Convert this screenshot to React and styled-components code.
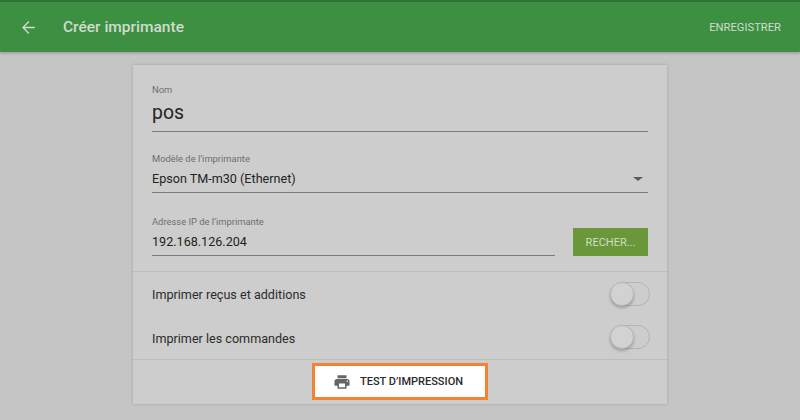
import React from 'react';
import styled, { createGlobalStyle } from 'styled-components';

const GlobalStyle = createGlobalStyle`
  html, body {
    margin: 0;
    padding: 0;
    background: #c5c5c5;
    font-family: Roboto, "Liberation Sans", sans-serif;
  }
`;

const Page = styled.div`
  width: 800px;
  height: 420px;
  overflow: hidden;
  background: #c5c5c5;
`;

const Header = styled.header`
  display: flex;
  align-items: center;
  height: 50px;
  border-top: 2px solid #2f7336;
  background: #3d8f42;
  box-shadow: 0 1px 3px rgba(0, 0, 0, 0.25);
`;

const BackButton = styled.div`
  display: flex;
  width: 19px;
  margin-left: 19px;
  color: #d2dcd2;
`;

const Title = styled.div`
  margin-left: 25px;
  flex: 1;
  color: #cfdccf;
  font-size: 15.5px;
  font-weight: 500;
`;

const SaveAction = styled.div`
  margin-right: 19px;
  color: #cfdccf;
  font-size: 11.2px;
  font-weight: 400;
`;

const Card = styled.main`
  width: 534px;
  height: 339px;
  margin: 13px auto 0;
  display: flex;
  flex-direction: column;
  background: #cdcdcd;
  box-shadow: 0 0 3px rgba(0, 0, 0, 0.18);
`;

const Fields = styled.div`
  display: flex;
  flex-direction: column;
  height: 207px;
  padding: 0 19px;
  box-sizing: border-box;
  border-bottom: 1px solid #bdbdbd;
`;

const Field = styled.div`
  display: flex;
  flex-direction: column;
  margin-top: ${({ $top }) => $top}px;
`;

const Label = styled.div`
  color: #6e6e6e;
  font-size: 9.4px;
  line-height: 12px;
`;

const Value = styled.div`
  display: flex;
  align-items: center;
  justify-content: space-between;
  box-sizing: border-box;
  height: ${({ $big }) => ($big ? 36 : 28)}px;
  border-bottom: 1px solid #7c7c7c;
  color: #232323;
  font-size: ${({ $big }) => ($big ? 19.4 : 12.6)}px;
  padding-bottom: ${({ $big }) => ($big ? 3 : 0)}px;
`;

const Caret = styled.span`
  width: 0;
  height: 0;
  margin-right: 5px;
  border-left: 5px solid transparent;
  border-right: 5px solid transparent;
  border-top: 4px solid #5c5c5c;
`;

const IpRow = styled.div`
  display: flex;
  align-items: flex-end;
  justify-content: space-between;
  margin-top: 23px;
`;

const IpField = styled.div`
  width: 403px;
`;

const SearchButton = styled.div`
  display: flex;
  align-items: center;
  justify-content: center;
  width: 75px;
  height: 28px;
  background: #6a9739;
  color: #cfdcc4;
  font-size: 11px;
`;

const Toggles = styled.div`
  display: flex;
  flex-direction: column;
  height: 87px;
  border-bottom: 1px solid #bdbdbd;
`;

const ToggleRow = styled.div`
  flex: 1;
  display: flex;
  align-items: center;
  justify-content: space-between;
  padding: 0 17px 0 19px;
  color: #2c2c2c;
  font-size: 12.6px;
`;

const ToggleLabel = styled.span`
  padding-top: 2px;
`;

const Toggle = styled.div`
  position: relative;
  box-sizing: border-box;
  width: 40px;
  height: 24px;
  border: 1px solid #b4b4b4;
  border-radius: 12px;
`;

const Knob = styled.span`
  position: absolute;
  left: -1px;
  top: -1px;
  width: 24px;
  height: 24px;
  border-radius: 50%;
  box-sizing: border-box;
  border: 1px solid #b8b8b8;
  background: #d2d2d2;
  box-shadow: 0 2px 3px rgba(0, 0, 0, 0.22);
`;

const Footer = styled.div`
  flex: 1;
  display: flex;
  align-items: center;
  justify-content: center;
`;

const TestButton = styled.div`
  display: flex;
  align-items: center;
  justify-content: center;
  gap: 9px;
  box-sizing: border-box;
  width: 176px;
  height: 37px;
  margin-top: -1px;
  padding-right: 4px;
  border: 3px solid #f58233;
  background: #ffffff;
  color: #2a2a2a;
  font-size: 11px;
  font-weight: 500;
`;

const PrinterIcon = () => (
  <svg width="18" height="18" viewBox="0 0 24 24" fill="#666666">
    <path d="M19 8H5c-1.66 0-3 1.34-3 3v6h4v4h12v-4h4v-6c0-1.66-1.34-3-3-3zm-3 11H8v-5h8v5zm3-7c-.55 0-1-.45-1-1s.45-1 1-1 1 .45 1 1-.45 1-1 1zm-1-9H6v4h12V3z" />
  </svg>
);

const ArrowIcon = () => (
  <svg width="19" height="19" viewBox="0 0 24 24" fill="none" stroke="currentColor" strokeWidth="1.6">
    <path d="M20 12H5.5M12.5 4.5L5 12l7.5 7.5" />
  </svg>
);

const App = () => (
  <Page>
    <GlobalStyle />
    <Header>
      <BackButton>
        <ArrowIcon />
      </BackButton>
      <Title>Créer imprimante</Title>
      <SaveAction>ENREGISTRER</SaveAction>
    </Header>
    <Card>
      <Fields>
        <Field $top={19}>
          <Label>Nom</Label>
          <Value $big>pos</Value>
        </Field>
        <Field $top={21}>
          <Label>Modèle de l’imprimante</Label>
          <Value>
            Epson TM-m30 (Ethernet)
            <Caret />
          </Value>
        </Field>
        <IpRow>
          <IpField>
            <Label>Adresse IP de l’imprimante</Label>
            <Value>192.168.126.204</Value>
          </IpField>
          <SearchButton>RECHER...</SearchButton>
        </IpRow>
      </Fields>
      <Toggles>
        <ToggleRow>
          <ToggleLabel>Imprimer reçus et additions</ToggleLabel>
          <Toggle>
            <Knob />
          </Toggle>
        </ToggleRow>
        <ToggleRow>
          <ToggleLabel>Imprimer les commandes</ToggleLabel>
          <Toggle>
            <Knob />
          </Toggle>
        </ToggleRow>
      </Toggles>
      <Footer>
        <TestButton>
          <PrinterIcon />
          TEST D’IMPRESSION
        </TestButton>
      </Footer>
    </Card>
  </Page>
);

export default App;
